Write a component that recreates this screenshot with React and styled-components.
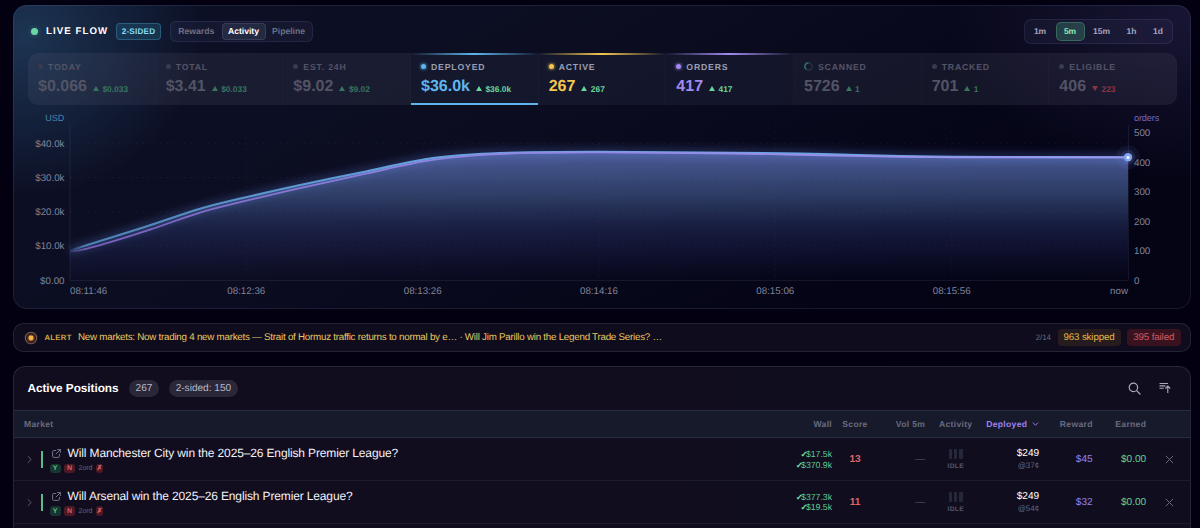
import React from 'react';
import styled, { createGlobalStyle, css } from 'styled-components';

const GlobalStyle = createGlobalStyle`
  *, *::before, *::after { box-sizing: border-box; }
  body {
    margin: 0;
    background: #030012;
    font-family: "Liberation Sans", Arial, sans-serif;
    text-rendering: geometricPrecision;
    color: #fff;
    height: 528px;
    overflow: hidden;
  }
`;

const Page = styled.main`
  display: flex;
  flex-direction: column;
  gap: 14px;
  height: 528px;
  padding: 5px 9px 0 13px;
  overflow: hidden;
`;

const FlowPanel = styled.section`
  flex: none;
  height: 304.4px;
  display: flex;
  flex-direction: column;
  border: 1px solid rgba(160, 170, 220, 0.12);
  border-radius: 14px;
  padding: 13px 13px 0 14px;
  background:
    radial-gradient(ellipse 175px 160px at 1% 10%, rgba(44, 86, 125, 0.5), rgba(44, 86, 125, 0) 100%),
    radial-gradient(ellipse 240px 160px at 100% 5%, rgba(62, 54, 108, 0.32), rgba(62, 54, 108, 0) 100%),
    linear-gradient(150deg, #0d1228 0%, #0b0c20 42%, #040416 78%, #040414 100%);
  background-origin: border-box;
`;

const FlowHeader = styled.header`
  display: flex;
  align-items: center;
  height: 25px;
  padding: 0 4px 0 3px;
`;

const LiveDot = styled.span`
  width: 7px;
  height: 7px;
  border-radius: 50%;
  background: #6bd6a4;
  box-shadow: 0 0 5px rgba(80, 214, 160, 0.35);
`;

const FlowTitle = styled.h1`
  margin: 1px 8px 0 8px;
  width: 62px;
  font-size: 9.7px;
  line-height: 12px;
  font-weight: 700;
  letter-spacing: 1.05px;
  white-space: nowrap;
`;

const SidedBadge = styled.span`
  display: flex;
  align-items: center;
  justify-content: center;
  width: 45px;
  height: 17px;
  border: 1px solid rgba(80, 170, 200, 0.34);
  border-radius: 4px;
  background: rgba(35, 95, 130, 0.38);
  color: #83dcf3;
  font-size: 8.1px;
  font-weight: 700;
  letter-spacing: 0.25px;
`;

const Segmented = styled.div`
  display: flex;
  align-items: center;
  gap: 2px;
  border: 1px solid rgba(150, 160, 210, 0.12);
  background: rgba(160, 160, 220, 0.06);
  ${({ $wide }) =>
    $wide
      ? css`
          width: 149.5px;
          height: 25px;
          margin-left: auto;
          border-radius: 7px;
          padding: 0 3px 0 2px;
        `
      : css`
          width: 143px;
          height: 21px;
          margin-left: 9px;
          border-radius: 6px;
          padding: 0 2px;
        `}
`;

const Tab = styled.button`
  flex: none;
  width: ${({ $w }) => $w}px;
  height: 17px;
  padding: 0;
  border: 1px solid ${({ $on }) => ($on ? 'rgba(170,180,220,0.14)' : 'transparent')};
  border-radius: 4px;
  background: ${({ $on }) => ($on ? 'rgba(150,160,200,0.13)' : 'none')};
  color: ${({ $on }) => ($on ? '#fff' : '#6d7085')};
  font: 700 8.7px/15.5px "Liberation Sans", Arial, sans-serif;
  text-rendering: inherit;
  letter-spacing: -0.05px;
  text-align: center;
`;

const RangeButton = styled(Tab)`
  height: 19.5px;
  line-height: 17.5px;
  font-size: 8.5px;
  border-radius: 5px;
  color: #a6a5bb;
  ${({ $on }) =>
    $on &&
    css`
      color: #8ce9bd;
      border-color: rgba(90, 180, 140, 0.36);
      background: rgba(60, 125, 105, 0.4);
    `}
`;

const StatStrip = styled.div`
  display: grid;
  grid-template-columns: repeat(9, 1fr);
  height: 51.5px;
  margin-top: 9px;
  border-radius: 10px;
  overflow: hidden;
`;

const StatCell = styled.div`
  position: relative;
  padding: 8.5px 0 0 10px;
  border-right: 1px solid rgba(120, 130, 180, 0.04);
  background: ${({ $on }) => ($on ? 'rgba(42, 50, 72, 0.3)' : 'rgba(112, 110, 138, 0.14)')};
  ${({ $on, $tone }) =>
    $on &&
    css`
      &::before {
        content: '';
        position: absolute;
        inset: 0 0 auto 0;
        height: 1.5px;
        background: linear-gradient(90deg, transparent, ${$tone} 50%, transparent);
      }
    `}
  ${({ $selected, $tone }) =>
    $selected &&
    css`
      &::after {
        content: '';
        position: absolute;
        inset: auto 0 0 0;
        height: 2px;
        background: ${$tone};
      }
    `}
`;

const StatLabel = styled.div`
  display: flex;
  align-items: center;
  gap: 5px;
  height: 10px;
  color: ${({ $on }) => ($on ? '#9a9fb3' : '#535466')};
  font-size: 8.7px;
  line-height: 10px;
  font-weight: 700;
  letter-spacing: 0.82px;
`;

const StatDot = styled.i`
  width: 5px;
  height: 5px;
  border-radius: 50%;
  background: ${({ $on, $tone }) => ($on ? $tone : '#393a4e')};
  box-shadow: ${({ $on, $tone }) => ($on ? `0 0 0 1.5px ${$tone}33, 0 0 5px ${$tone}66` : 'none')};
`;

const StatValue = styled.div`
  display: flex;
  align-items: baseline;
  gap: 6px;
  margin-top: 5.5px;
  font-size: 16px;
  line-height: 20px;
  font-weight: 700;
  color: ${({ $on, $tone }) => ($on ? $tone : '#525365')};
`;

const Delta = styled.span`
  display: flex;
  align-items: center;
  gap: 3.5px;
  font-size: 8.4px;
  line-height: 10px;
  color: ${({ $down, $on }) => ($down ? '#88363f' : $on ? '#68d79d' : '#37755f')};
`;

const Triangle = styled.i`
  width: 0;
  height: 0;
  border: 3px solid transparent;
  ${({ $down }) =>
    $down
      ? css`
          border-top: 5.5px solid currentColor;
          border-bottom: 0;
        `
      : css`
          border-bottom: 5.5px solid currentColor;
          border-top: 0;
        `}
`;

const ChartSvg = styled.svg`
  display: block;
  flex: none;
  width: 1176px;
  height: 199px;
  margin-left: -14px;
  text {
    font-family: "Liberation Sans", Arial, sans-serif;
    font-size: 9.75px;
    fill: #80849a;
  }
`;

const AlertBar = styled.section`
  flex: none;
  display: flex;
  align-items: center;
  height: 28.6px;
  padding: 0 9.5px 0 10px;
  border: 1px solid rgba(160, 160, 210, 0.15);
  border-radius: 10px;
  background: #0f0c1d;
`;

const AlertTag = styled.span`
  margin-left: 6.5px;
  width: 33.5px;
  font-size: 7.7px;
  font-weight: 700;
  letter-spacing: 0.3px;
  color: #d3a83f;
`;

const AlertText = styled.span`
  flex: 1;
  font-size: 9.8px;
  letter-spacing: -0.255px;
  color: #e8c760;
  white-space: nowrap;
`;

const AlertCount = styled.span`
  font-size: 7.9px;
  color: #6a6b7e;
  margin-right: 6.5px;
`;

const AlertPill = styled.span`
  display: flex;
  align-items: center;
  justify-content: center;
  width: ${({ $w }) => $w}px;
  height: 17.5px;
  border-radius: 4px;
  margin-left: ${({ $gap }) => $gap || 0}px;
  font-size: 9.7px;
  letter-spacing: -0.1px;
  color: ${({ $red }) => ($red ? '#d65a60' : '#e5b843')};
  background: ${({ $red }) => ($red ? '#38131f' : '#261c20')};
`;

const TableCard = styled.section`
  flex: none;
  height: 200px;
  border: 1px solid rgba(160, 160, 210, 0.17);
  border-radius: 12px;
  background: linear-gradient(90deg, #120d1e, #100d1e);
  overflow: hidden;
`;

const TableTitleBar = styled.header`
  display: flex;
  align-items: center;
  height: 43px;
  padding: 0 19px 0 13.5px;
`;

const TableTitle = styled.h2`
  margin: 0 10.5px 0 0;
  width: 91px;
  white-space: nowrap;
  font-size: 11.8px;
  line-height: 14px;
  letter-spacing: -0.05px;
  font-weight: 700;
`;

const CountPill = styled.span`
  height: 17px;
  margin-right: 10px;
  padding: 0 6.6px;
  border-radius: 9px;
  background: #2a2738;
  color: #b8b8c8;
  font-size: 10.1px;
  line-height: 17px;
`;

const TitleActions = styled.div`
  display: flex;
  align-items: center;
  gap: 18px;
  margin-left: auto;
  color: #a9abba;
  svg { display: block; }
`;

const columns = css`
  display: grid;
  grid-template-columns: 1fr 60px 46px 47.2px 61px 53px 53.5px 53.5px 43.8px;
  align-items: center;
`;

const HeadRow = styled.div`
  ${columns}
  height: 28px;
  border-top: 1px solid rgba(150, 160, 200, 0.14);
  border-bottom: 1px solid rgba(150, 160, 200, 0.14);
  background: #171a2a;
  color: #686b7f;
  font-size: 8.6px;
  font-weight: 700;
  letter-spacing: 0.3px;
`;

const HeadCell = styled.div`
  display: flex;
  align-items: center;
  white-space: nowrap;
  justify-content: ${({ $align }) => $align || 'flex-end'};
  padding-left: ${({ $indent }) => $indent || 0}px;
  color: ${({ $sorted }) => ($sorted ? '#9f80ee' : 'inherit')};
  svg { margin-left: 5px; }
`;

const Row = styled.div`
  ${columns}
  height: 42.8px;
  padding-top: 1.6px;
  border-bottom: 1px solid rgba(150, 160, 200, 0.1);
`;

const MarketCell = styled.div`
  display: flex;
  align-items: center;
  padding-left: 12px;
`;

const SideBar = styled.i`
  width: 1.6px;
  height: 17px;
  margin: 0 7px 0 8px;
  background: #58bd8b;
`;

const MarketInfo = styled.div`
  display: flex;
  flex-direction: column;
`;

const MarketName = styled.div`
  display: flex;
  align-items: center;
  height: 15px;
  padding-left: 2px;
  font-size: 12px;
  letter-spacing: -0.14px;
  line-height: 15px;
  color: #f3f2f8;
  white-space: nowrap;
  svg { margin-right: 7px; }
`;

const Tags = styled.div`
  display: flex;
  align-items: center;
  height: 10px;
  margin-top: 2.5px;
  font-size: 7.1px;
  letter-spacing: -0.1px;
  color: #63667a;
`;

const Tag = styled.span`
  display: inline-flex;
  align-items: center;
  justify-content: center;
  width: ${({ $w }) => $w}px;
  height: 9.5px;
  margin-right: 3.5px;
  border-radius: 3px;
  font-size: 7px;
  font-weight: 700;
  color: ${({ $red }) => ($red ? '#d9636a' : '#5cc593')};
  background: ${({ $red }) => ($red ? '#4c1924' : '#173630')};
`;

const CrossTag = styled(Tag)`
  margin-left: 3.5px;
`;

const NumCell = styled.div`
  text-align: ${({ $align }) => $align || 'right'};
  font-size: ${({ $size }) => $size || 10.1}px;
  font-weight: ${({ $bold }) => ($bold ? 700 : 400)};
  color: ${({ $color }) => $color};
  line-height: 11px;
`;

const WallLine = styled.div`
  font-size: 8.8px;
  letter-spacing: -0.05px;
  line-height: 10.6px;
  color: #5fc995;
  white-space: nowrap;
`;

const Check = styled.span`
  font-weight: 700;
  margin-right: -1.6px;
  color: #73e3ad;
  font-size: 8.4px;
`;

const Price = styled.div`
  font-size: 8px;
  line-height: 10px;
  margin-top: 2px;
  color: #64667a;
`;

const Idle = styled.div`
  display: flex;
  flex-direction: column;
  align-items: center;
  gap: 4px;
  font-size: 6.7px;
  line-height: 7px;
  font-weight: 700;
  letter-spacing: 0.3px;
  color: #54576a;
`;

const IdleBars = styled.div`
  display: flex;
  gap: 2px;
  i {
    width: 3.3px;
    height: 10px;
    border-radius: 1px;
    background: #25273a;
  }
`;

const CloseCell = styled.div`
  display: flex;
  justify-content: center;
  padding-left: 3.5px;
`;

const BLUE = '#5fb4ee';
const AMBER = '#f5c64e';
const VIOLET = '#a08af0';

const stats = [
  { label: 'TODAY', value: '$0.066', delta: '$0.033' },
  { label: 'TOTAL', value: '$3.41', delta: '$0.033' },
  { label: 'EST. 24H', value: '$9.02', delta: '$9.02' },
  { label: 'DEPLOYED', value: '$36.0k', delta: '$36.0k', on: true, selected: true, tone: BLUE },
  { label: 'ACTIVE', value: '267', delta: '267', on: true, tone: AMBER },
  { label: 'ORDERS', value: '417', delta: '417', on: true, tone: VIOLET },
  { label: 'SCANNED', value: '5726', delta: '1', spinner: true },
  { label: 'TRACKED', value: '701', delta: '1' },
  { label: 'ELIGIBLE', value: '406', delta: '223', down: true },
];

const deployedPoints = [
  [70, 250.5], [100, 241], [150, 225.2], [200, 208.8], [240, 198.6],
  [300, 185], [367, 171.2], [425, 159.2], [475, 154.3], [530, 152.4],
  [600, 151.9], [733, 152.8], [800, 153.6], [867, 155.3], [933, 156.6], [1000, 157], [1128, 157.2],
];
const orderPoints = [
  [70, 251.8], [86, 248.8], [111, 241.9], [150, 229.6], [200, 212.6], [240, 202.2],
  [300, 188.2], [367, 173.4], [425, 161.2], [475, 155.4], [530, 152.9],
  [600, 152.3], [733, 153.5], [800, 154.8], [867, 156.2], [933, 157.2], [1000, 157.4], [1128, 157.4],
];

function smooth(points) {
  let d = `M${points[0].join(' ')}`;
  for (let i = 0; i < points.length - 1; i += 1) {
    const p0 = points[i - 1] || points[i];
    const p1 = points[i];
    const p2 = points[i + 1];
    const p3 = points[i + 2] || p2;
    d += `C${p1[0] + (p2[0] - p0[0]) / 6} ${p1[1] + (p2[1] - p0[1]) / 6} ${p2[0] - (p3[0] - p1[0]) / 6} ${
      p2[1] - (p3[1] - p1[1]) / 6
    } ${p2[0]} ${p2[1]}`;
  }
  return d;
}

const leftTicks = [['$40.0k', 143.2], ['$30.0k', 177.5], ['$20.0k', 211.8], ['$10.0k', 246.1], ['$0.00', 280.4]];
const rightTicks = [['500', 133.2], ['400', 162.6], ['300', 192], ['200', 221.4], ['100', 250.8], ['0', 280.4]];
const timeTicks = [['08:12:36', 246.3], ['08:13:26', 422.7], ['08:14:16', 599], ['08:15:06', 775.3], ['08:15:56', 951.7]];

function FlowChart() {
  const blue = smooth(deployedPoints);
  const violet = smooth(orderPoints);
  return (
    <ChartSvg viewBox="14 105 1176 199">
      <defs>
        <linearGradient id="area" gradientUnits="userSpaceOnUse" x1="0" y1="152" x2="0" y2="280">
          <stop offset="0" stopColor="#7189e0" stopOpacity="0.64" />
          <stop offset="0.35" stopColor="#5b7ec0" stopOpacity="0.43" />
          <stop offset="0.6" stopColor="#4557a8" stopOpacity="0.26" />
          <stop offset="1" stopColor="#3c43a0" stopOpacity="0.01" />
        </linearGradient>
        <linearGradient id="lineBlue" gradientUnits="userSpaceOnUse" x1="70" y1="0" x2="1128" y2="0">
          <stop offset="0" stopColor="#5aa9e0" stopOpacity="0.1" />
          <stop offset="0.015" stopColor="#5aa0d4" stopOpacity="0.75" />
          <stop offset="0.35" stopColor="#66a4e0" />
          <stop offset="1" stopColor="#6aa6e6" />
        </linearGradient>
        <linearGradient id="lineViolet" gradientUnits="userSpaceOnUse" x1="70" y1="0" x2="1128" y2="0">
          <stop offset="0" stopColor="#9a78dc" stopOpacity="0.1" />
          <stop offset="0.015" stopColor="#8a6cd0" stopOpacity="0.8" />
          <stop offset="0.35" stopColor="#8f86e4" />
          <stop offset="1" stopColor="#a196f0" />
        </linearGradient>
        <filter id="glow" filterUnits="userSpaceOnUse" x="50" y="130" width="1100" height="150">
          <feGaussianBlur stdDeviation="4" />
        </filter>
      </defs>
      <g stroke="#8c96c8" strokeOpacity="0.07" strokeDasharray="2 4">
        {leftTicks.slice(0, 4).map(([t, y]) => (
          <line key={t} x1="70" x2="1128" y1={y} y2={y} />
        ))}
        {timeTicks.map(([t, x]) => (
          <line key={t} x1={x} x2={x} y1="125" y2="280" />
        ))}
      </g>
      <g stroke="#8c96c8" strokeOpacity="0.12">
        <line x1="70" x2="70" y1="125" y2="280.5" />
        <line x1="1128.5" x2="1128.5" y1="125" y2="280.5" />
        <line x1="70" x2="1128" y1="280.5" y2="280.5" />
      </g>
      <path d={`${blue}L1128 280L70 280Z`} fill="url(#area)" />
      <path d={blue} fill="none" stroke="#6c8cf0" strokeWidth="6" strokeOpacity="0.34" filter="url(#glow)" />
      <path d={blue} fill="none" stroke="url(#lineBlue)" strokeWidth="2.1" />
      <path d={violet} fill="none" stroke="url(#lineViolet)" strokeWidth="1.8" />
      <circle cx="1128" cy="157.3" r="12" fill="#7c90f0" fillOpacity="0.08" />
      <circle cx="1128" cy="157.3" r="7.5" fill="#7c90f0" fillOpacity="0.14" />
      <circle cx="1128" cy="157.3" r="4.2" fill="#82a5f2" />
      <circle cx="1128" cy="157.5" r="1.5" fill="#fff" />
      {leftTicks.map(([t, y]) => (
        <text key={t} x="64.5" y={y + 3.3} textAnchor="end">{t}</text>
      ))}
      {rightTicks.map(([t, y]) => (
        <text key={t} x="1134" y={y + 3.2}>{t}</text>
      ))}
      <text x="70" y="294.4">08:11:46</text>
      {timeTicks.map(([t, x]) => (
        <text key={t} x={x} y="294.4" textAnchor="middle">{t}</text>
      ))}
      <text x="1128" y="294.4" textAnchor="end">now</text>
      <text x="64.3" y="121.3" textAnchor="end" style={{ fill: '#4d84b0', fontSize: 9 }}>USD</text>
      <text x="1134" y="121.3" style={{ fill: '#7b68c0', fontSize: 9.2, letterSpacing: -0.15 }}>orders</text>
    </ChartSvg>
  );
}

const rows = [
  { name: 'Will Manchester City win the 2025–26 English Premier League?', wall: ['$17.5k', '$370.9k'], score: '13', price: '@37¢', reward: '$45' },
  { name: 'Will Arsenal win the 2025–26 English Premier League?', wall: ['$377.3k', '$19.5k'], score: '11', price: '@54¢', reward: '$32' },
];

const ExternalIcon = () => (
  <svg width="9" height="9" viewBox="0 0 9 9" fill="none" stroke="#72758a" strokeWidth="1" strokeLinecap="round" strokeLinejoin="round">
    <path d="M3.8 1.5H1.7Q.6 1.5.6 2.6V7.3Q.6 8.4 1.7 8.4H6.3Q7.4 8.4 7.4 7.3V5.3M5.5.6H8.4V3.5M8.3.7L4 5" />
  </svg>
);

export default function App() {
  return (
    <>
      <GlobalStyle />
      <Page>
        <FlowPanel>
          <FlowHeader>
            <LiveDot />
            <FlowTitle>LIVE FLOW</FlowTitle>
            <SidedBadge>2-SIDED</SidedBadge>
            <Segmented>
              <Tab $w={46.5}>Rewards</Tab>
              <Tab $w={44} $on>Activity</Tab>
              <Tab $w={42}>Pipeline</Tab>
            </Segmented>
            <Segmented $wide>
              <RangeButton $w={27}>1m</RangeButton>
              <RangeButton $w={29} $on>5m</RangeButton>
              <RangeButton $w={30}>15m</RangeButton>
              <RangeButton $w={26}>1h</RangeButton>
              <RangeButton $w={23}>1d</RangeButton>
            </Segmented>
          </FlowHeader>
          <StatStrip>
            {stats.map((s) => (
              <StatCell key={s.label} $on={s.on} $selected={s.selected} $tone={s.tone}>
                <StatLabel $on={s.on}>
                  {s.spinner ? (
                    <svg width="9" height="9" viewBox="0 0 9 9" fill="none" strokeWidth="1.3">
                      <circle cx="4.5" cy="4.5" r="3.6" stroke="#20394a" />
                      <path d="M4.5 .9A3.6 3.6 0 0 0 2.2 7.3" stroke="#2f7770" />
                    </svg>
                  ) : (
                    <StatDot $on={s.on} $tone={s.tone} />
                  )}
                  {s.label}
                </StatLabel>
                <StatValue $on={s.on} $tone={s.tone}>
                  {s.value}
                  <Delta $on={s.on} $down={s.down}>
                    <Triangle $down={s.down} />
                    {s.delta}
                  </Delta>
                </StatValue>
              </StatCell>
            ))}
          </StatStrip>
          <FlowChart />
        </FlowPanel>

        <AlertBar>
          <svg width="14" height="14" viewBox="0 0 14 14">
            <circle cx="7" cy="7" r="5.7" fill="#2b1a1c" stroke="#7d5b55" strokeWidth="1.1" />
            <circle cx="7" cy="7" r="3.6" fill="#a8652a" fillOpacity="0.6" />
            <circle cx="7" cy="7" r="2.4" fill="#f5b54c" />
          </svg>
          <AlertTag>ALERT</AlertTag>
          <AlertText>
            New markets: Now trading 4 new markets — Strait of Hormuz traffic returns to normal by e… · Will Jim Parillo win the Legend Trade Series? …
          </AlertText>
          <AlertCount>2/14</AlertCount>
          <AlertPill $w={63}>963 skipped</AlertPill>
          <AlertPill $w={53.5} $gap={6.5} $red>395 failed</AlertPill>
        </AlertBar>

        <TableCard>
          <TableTitleBar>
            <TableTitle>Active Positions</TableTitle>
            <CountPill>267</CountPill>
            <CountPill>2-sided: 150</CountPill>
            <TitleActions>
              <svg width="13" height="13" viewBox="0 0 13 13" fill="none" stroke="currentColor" strokeWidth="1.2" strokeLinecap="round">
                <circle cx="5.4" cy="5.4" r="4.2" />
                <path d="M8.6 8.6L12 12" />
              </svg>
              <svg width="12" height="12" viewBox="0 0 12 12" fill="none" stroke="currentColor" strokeWidth="1.1">
                <path d="M.5 1.5H9M.5 3.9H6.5M.5 6.3H4.8M8.8 11V4.2M6.4 6.5L8.8 4.1L11.2 6.5" />
              </svg>
            </TitleActions>
          </TableTitleBar>
          <HeadRow>
            <HeadCell $align="flex-start" $indent={10}>Market</HeadCell>
            <HeadCell>Wall</HeadCell>
            <HeadCell $align="center">Score</HeadCell>
            <HeadCell>Vol 5m</HeadCell>
            <HeadCell $align="center">Activity</HeadCell>
            <HeadCell $sorted>
              Deployed
              <svg width="8" height="6" viewBox="0 0 8 6" fill="none" stroke="currentColor" strokeWidth="1.1">
                <path d="M1 1.4L4 4.4L7 1.4" />
              </svg>
            </HeadCell>
            <HeadCell>Reward</HeadCell>
            <HeadCell>Earned</HeadCell>
            <HeadCell />
          </HeadRow>
          {rows.map((r) => (
            <Row key={r.name}>
              <MarketCell>
                <svg width="7" height="9" viewBox="0 0 7 9" fill="none" stroke="#5b5d70" strokeWidth="1">
                  <path d="M1.8 1.2L5.2 4.5L1.8 7.8" />
                </svg>
                <SideBar />
                <MarketInfo>
                  <MarketName>
                    <ExternalIcon />
                    {r.name}
                  </MarketName>
                  <Tags>
                    <Tag $w={11}>Y</Tag>
                    <Tag $w={11} $red>N</Tag>
                    2ord
                    <CrossTag $w={7} $red>✗</CrossTag>
                  </Tags>
                </MarketInfo>
              </MarketCell>
              <NumCell>
                {r.wall.map((w) => (
                  <WallLine key={w}>
                    <Check>✓</Check>
                    {w}
                  </WallLine>
                ))}
              </NumCell>
              <NumCell $align="center" $bold $color="#e06468">{r.score}</NumCell>
              <NumCell $color="#43465a">—</NumCell>
              <Idle>
                <IdleBars><i /><i /><i /></IdleBars>
                IDLE
              </Idle>
              <NumCell $color="#fff">
                {'$249'}
                <Price>{r.price}</Price>
              </NumCell>
              <NumCell $color="#9a7fea">{r.reward}</NumCell>
              <NumCell $color="#60d098">$0.00</NumCell>
              <CloseCell>
                <svg width="9" height="9" viewBox="0 0 9 9" stroke="#66687c" strokeWidth="1">
                  <path d="M.8 .8L8.2 8.2M8.2 .8L.8 8.2" />
                </svg>
              </CloseCell>
            </Row>
          ))}
        </TableCard>
      </Page>
    </>
  );
}
